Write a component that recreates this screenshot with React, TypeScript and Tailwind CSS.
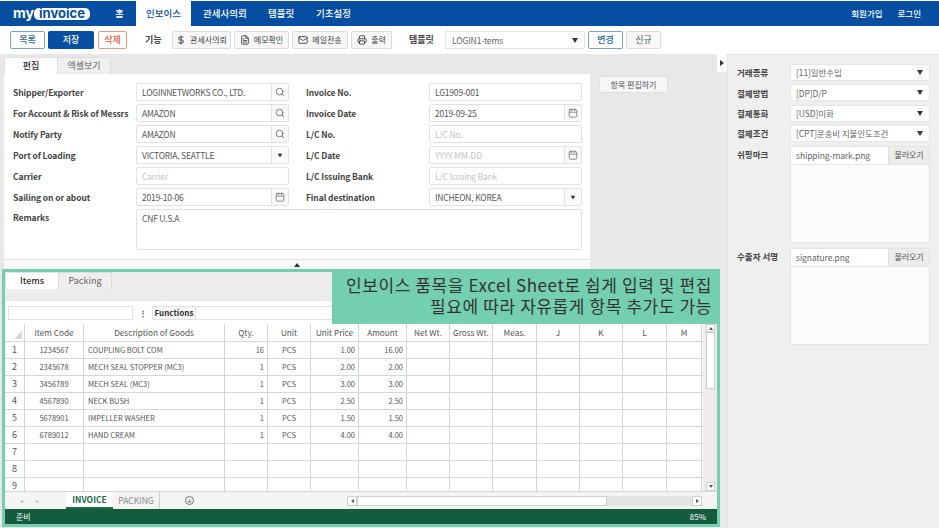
import { Calendar, DollarSign, FileText, Mail, Printer, Search } from "lucide-react";
import type { ReactNode } from "react";

const rows = [
  ["1234567", "COUPLING BOLT COM", "16", "PCS", "1.00", "16.00"],
  ["2345678", "MECH SEAL STOPPER (MC3)", "1", "PCS", "2.00", "2.00"],
  ["3456789", "MECH SEAL (MC3)", "1", "PCS", "3.00", "3.00"],
  ["4567890", "NECK BUSH", "1", "PCS", "2.50", "2.50"],
  ["5678901", "IMPELLER WASHER", "1", "PCS", "1.50", "1.50"],
  ["6789012", "HAND CREAM", "1", "PCS", "4.00", "4.00"],
];
const heads = ["Item Code", "Description of Goods", "Qty.", "Unit", "Unit Price", "Amount", "Net Wt.", "Gross Wt.", "Meas.", "J", "K", "L", "M"];
const gridCols = "grid grid-cols-[20px_59px_141px_43px_43px_48px_48px_43px_43px_44px_43px_43px_44px_35px]";

function Caret({ className = "" }: { className?: string }) {
  return <span className={`block w-0 h-0 border-l-[3.5px] border-r-[3.5px] border-t-[5px] border-l-transparent border-r-transparent border-t-[#333] ${className}`} />;
}

function ToolBtn({ icon, label, w }: { icon: ReactNode; label: string; w: string }) {
  return (
    <div className={`${w} h-[18px] flex items-center justify-center gap-[4px] bg-[#f7f7f7] border border-[#dcdcdc] rounded-[2px] text-[8px] text-[#444] whitespace-nowrap`}>
      {icon}
      <span>{label}</span>
    </div>
  );
}

function Field({ value, placeholder, addon }: { value?: string; placeholder?: string; addon?: "search" | "date" | "select" }) {
  return (
    <div className="w-[153px] shrink-0 h-[18px] flex items-stretch bg-white border border-[#e2e2e2] rounded-[2px] text-[8.5px] tracking-[-0.2px]">
      <div className={`flex-1 pl-[5px] flex items-center ${value ? "text-[#555]" : "text-[#c4c4c4]"}`}>{value ?? placeholder}</div>
      {addon && (
        <div className="w-[17px] flex items-center justify-center border-l border-[#e2e2e2] bg-[#fafafa]">
          {addon === "search" && <Search size={10} color="#666" />}
          {addon === "date" && <Calendar size={10} color="#777" />}
          {addon === "select" && <Caret className="scale-75" />}
        </div>
      )}
    </div>
  );
}

function FormRow({ a, b, c, d }: { a: string; b: ReactNode; c: string; d: ReactNode }) {
  return (
    <div className="flex items-center h-[18px] mb-[3px]">
      <div className="w-[131px] shrink-0 pl-[8px] text-[8.5px] tracking-[-0.1px] font-bold text-[#444] whitespace-nowrap">{a}</div>
      {b}
      <div className="w-[140px] shrink-0 pl-[17px] text-[8.5px] tracking-[-0.1px] font-bold text-[#444] whitespace-nowrap">{c}</div>
      {d}
    </div>
  );
}

function SideSelect({ label, value }: { label: string; value: string }) {
  return (
    <div className="flex items-center h-[17px] mb-[3.4px]">
      <div className="w-[53px] text-[8.5px] font-bold text-[#444]">{label}</div>
      <div className="w-[140px] h-[17px] flex items-center justify-between px-[5px] pr-[6px] bg-white border border-[#e6e6e6] rounded-[2px] text-[8.5px] tracking-[-0.1px] text-[#666]">
        <span>{value}</span>
        <Caret />
      </div>
    </div>
  );
}

function FileBox({ label, file }: { label: string; file: string }) {
  return (
    <div className="flex items-start">
      <div className="w-[53px] pt-[2px] text-[8.5px] font-bold text-[#444] whitespace-nowrap">{label}</div>
      <div className="w-[140px] border border-[#e4e4e4] rounded-[2px]">
        <div className="flex h-[17px] bg-white text-[8.5px] tracking-[-0.1px] text-[#666]">
          <div className="flex-1 pl-[5px] flex items-center">{file}</div>
          <div className="w-[41px] flex items-center justify-center bg-[#ececec] border-l border-[#dedede] text-[8px] text-[#555]">불러오기</div>
        </div>
        <div className="h-[78px] bg-[#fbfbfb] border-t border-[#e4e4e4]" />
      </div>
    </div>
  );
}

function Tabs({ first, second }: { first: string; second: string }) {
  return (
    <div className="flex h-[17px] text-[9px]">
      <div className="w-[53px] flex items-center justify-center bg-white border-t border-l border-[#e2e2e2] font-medium text-[#333]">{first}</div>
      <div className="w-[54px] flex items-center justify-center bg-[#efefef] border border-b-0 border-[#dcdcdc] text-[#666]">{second}</div>
    </div>
  );
}

export default function App() {
  return (
    <div className="w-[939px] h-[528px] overflow-hidden flex flex-col bg-white font-['Noto_Sans_CJK_KR','Noto_Sans',sans-serif]">
      {/* Header */}
      <div className="h-[25px] mt-[1px] shrink-0 bg-[#054ea1] flex items-center text-white text-[9.5px] font-medium">
        <div className="w-[136px] flex items-center pl-[13px]">
          <span className="w-[20px] text-[14px] leading-none font-bold font-['Inter',sans-serif] -mt-[2px]">my</span>
          <span className="ml-[1px] w-[56px] h-[12px] rounded-[5px] bg-white text-[#054ea1] text-[13px] leading-[11px] font-bold font-['Inter',sans-serif] text-center">invoice</span>
          <span className="ml-[25px]">홈</span>
        </div>
        <div className="w-[55px] h-full flex items-center justify-center bg-white text-[#054ea1]">인보이스</div>
        <span className="ml-[12px] w-[41px] whitespace-nowrap">관세사의뢰</span>
        <span className="ml-[24px] w-[25px] whitespace-nowrap">템플릿</span>
        <span className="ml-[23px] w-[33px] whitespace-nowrap">기초설정</span>
        <span className="ml-auto text-[8.5px]">회원가입</span>
        <span className="ml-[15px] mr-[18px] text-[8.5px]">로그인</span>
      </div>

      {/* Toolbar */}
      <div className="h-[28px] shrink-0 bg-white flex items-center pl-[10px] text-[9px]">
        <div className="w-[35px] h-[18px] flex items-center justify-center bg-white border border-[#7ba5bd] rounded-[2px] text-[#2a6a96] font-medium">목록</div>
        <div className="ml-[3px] w-[46px] h-[18px] flex items-center justify-center bg-[#054ea1] rounded-[2px] text-white font-medium">저장</div>
        <div className="ml-[4px] w-[29px] h-[18px] flex items-center justify-center bg-white border border-[#e29a84] rounded-[2px] text-[#d9603f] font-medium">삭제</div>
        <span className="ml-[18px] w-[27px] font-bold text-[#444]">기능</span>
        <ToolBtn w="w-[59px]" icon={<DollarSign size={10} color="#333" />} label="관세사의뢰" />
        <div className="w-[3px]" />
        <ToolBtn w="w-[55px]" icon={<FileText size={10} color="#333" />} label="메모확인" />
        <div className="w-[3px]" />
        <ToolBtn w="w-[56px]" icon={<Mail size={10} color="#333" />} label="메일전송" />
        <div className="w-[3px]" />
        <ToolBtn w="w-[41px]" icon={<Printer size={10} color="#333" />} label="출력" />
        <span className="ml-[17px] w-[36px] font-bold text-[#444]">템플릿</span>
        <div className="w-[140px] h-[18px] flex items-center justify-between px-[6px] bg-white border border-[#e4e4e4] rounded-[2px] text-[8.5px] tracking-[-0.1px] text-[#666]">
          <span>LOGIN1-tems</span>
          <Caret />
        </div>
        <div className="ml-[3px] w-[35px] h-[18px] flex items-center justify-center bg-white border border-[#7ba5bd] rounded-[2px] text-[#2a6a96] font-medium">변경</div>
        <div className="ml-[3px] w-[35px] h-[18px] flex items-center justify-center bg-[#f7f7f7] border border-[#dcdcdc] rounded-[2px] text-[#555]">신규</div>
      </div>

      {/* Body */}
      <div className="flex-1 flex min-h-0 bg-[#e8e8e8]">
        <div className="w-[727px] shrink-0 flex flex-col">
          <div className="flex h-[215px] shrink-0">
            <div className="ml-[4px] mt-[3px] w-[586px] flex flex-col">
              <Tabs first="편집" second="엑셀보기" />
              <div className="flex-1 bg-white pt-[9px] pl-[1px]">
                <FormRow a="Shipper/Exporter" b={<Field value="LOGINNETWORKS CO., LTD." addon="search" />} c="Invoice No." d={<Field value="LG1909-001" />} />
                <FormRow a="For Account & Risk of Messrs" b={<Field value="AMAZON" addon="search" />} c="Invoice Date" d={<Field value="2019-09-25" addon="date" />} />
                <FormRow a="Notify Party" b={<Field value="AMAZON" addon="search" />} c="L/C No." d={<Field placeholder="L/C No." />} />
                <FormRow a="Port of Loading" b={<Field value="VICTORIA, SEATTLE" addon="select" />} c="L/C Date" d={<Field placeholder="YYYY-MM-DD" addon="date" />} />
                <FormRow a="Carrier" b={<Field placeholder="Carrier" />} c="L/C Issuing Bank" d={<Field placeholder="L/C Issuing Bank" />} />
                <FormRow a="Sailing on or about" b={<Field value="2019-10-06" addon="date" />} c="Final destination" d={<Field value="INCHEON, KOREA" addon="select" />} />
                <div className="flex">
                  <div className="w-[131px] pl-[8px] pt-[2px] text-[8.5px] tracking-[-0.1px] font-bold text-[#444]">Remarks</div>
                  <div className="w-[446px] h-[41px] bg-white border border-[#e2e2e2] rounded-[2px] px-[5px] pt-[2px] text-[8.5px] tracking-[-0.2px] text-[#555]">CNF U.S.A</div>
                </div>
              </div>
              <div className="h-[10px] bg-[#fafafa] border-t border-[#e4e4e4] flex items-center justify-center">
                <span className="block w-0 h-0 border-l-[3px] border-r-[3px] border-b-[4px] border-l-transparent border-r-transparent border-b-[#333]" />
              </div>
            </div>
            <div className="ml-[9px] mt-[22px] w-[69px] h-[17px] flex items-center justify-center bg-[#f6f6f6] border border-[#e0e0e0] rounded-[2px] text-[8px] text-[#555]">항목 편집하기</div>
            <div className="ml-[49px] w-[10px] h-[18px] flex items-center justify-center bg-white">
              <span className="block w-0 h-0 border-t-[3px] border-b-[3px] border-l-[4px] border-t-transparent border-b-transparent border-l-[#333]" />
            </div>
          </div>

          {/* Sheet */}
          <div className="relative ml-[2px] w-[718px] h-[258px] border-[3px] border-[#74cfb0] bg-[#ececec] flex flex-col">
            <Tabs first="Items" second="Packing" />
            <div className="h-[12px] bg-[#ececec]" />
            <div className="h-[23px] bg-white flex items-center pl-[3px] text-[8px]">
              <div className="w-[125px] h-[14px] bg-white border border-[#e2e2e2]" />
              <span className="ml-[6px] w-[13px] text-[#555] font-bold">⋮</span>
              <div className="w-[44px] h-[14px] flex items-center justify-center bg-[#f6f6f6] border border-[#e2e2e2] font-bold text-[#333]">Functions</div>
              <div className="flex-1 h-[14px] bg-white border-y border-[#e2e2e2]" />
            </div>
            <div className="h-[167px] flex overflow-hidden bg-white">
              <div className="w-[698px] shrink-0 overflow-hidden">
                <div className={`${gridCols} h-[18px] border-b border-[#d6d6d6] text-[8.2px] text-[#555]`}>
                  <div className="border-r border-[#d6d6d6] flex items-end justify-end p-[2px]">
                    <span className="block w-0 h-0 border-l-[8px] border-b-[8px] border-l-transparent border-b-[#d8d8d8]" />
                  </div>
                  {heads.map((h) => (
                    <div key={h} className="border-r border-[#d6d6d6] flex items-center justify-center whitespace-nowrap">{h}</div>
                  ))}
                </div>
                {[1, 2, 3, 4, 5, 6, 7, 8, 9].map((n) => {
                  const row = rows[n - 1];
                  return (
                    <div key={n} className={`${gridCols} h-[17px] border-b border-[#d6d6d6] text-[7.5px] text-[#555]`}>
                      <div className="border-r border-[#d6d6d6] flex items-center justify-center text-[9px]">{n}</div>
                      <div className="border-r border-[#d6d6d6] flex items-center justify-center">{row?.[0]}</div>
                      <div className="border-r border-[#d6d6d6] flex items-center pl-[4px] whitespace-nowrap">{row?.[1]}</div>
                      <div className="border-r border-[#d6d6d6] flex items-center justify-end pr-[3px]">{row?.[2]}</div>
                      <div className="border-r border-[#d6d6d6] flex items-center justify-center">{row?.[3]}</div>
                      <div className="border-r border-[#d6d6d6] flex items-center justify-end pr-[3px]">{row?.[4]}</div>
                      <div className="border-r border-[#d6d6d6] flex items-center justify-end pr-[3px]">{row?.[5]}</div>
                      {[0, 1, 2, 3, 4, 5, 6].map((c) => (
                        <div key={c} className="border-r border-[#d6d6d6]" />
                      ))}
                    </div>
                  );
                })}
              </div>
              <div className="flex-1 bg-[#ececec] flex flex-col items-center pl-[1px]">
                <div className="w-[9px] h-[8px] bg-white border border-[#cfcfcf] flex items-center justify-center">
                  <span className="block w-0 h-0 border-l-[2px] border-r-[2px] border-b-[3px] border-l-transparent border-r-transparent border-b-[#555]" />
                </div>
                <div className="w-[9px] h-[57px] bg-white border border-[#cfcfcf]" />
                <div className="w-[9px] h-[9px] mt-auto bg-white border border-[#cfcfcf] flex items-center justify-center">
                  <span className="block w-0 h-0 border-l-[2px] border-r-[2px] border-t-[3px] border-l-transparent border-r-transparent border-t-[#555]" />
                </div>
              </div>
            </div>
            <div className="h-[18px] bg-[#f4f4f4] border-t border-[#d6d6d6] flex items-center text-[#bbb]">
              <div className="w-[61px] shrink-0 flex items-center pl-[15px] gap-[13px] text-[6px]">
                <span>◂</span>
                <span>▸</span>
              </div>
              <div className="w-[47px] shrink-0 h-full flex items-center justify-center bg-white border-b-2 border-[#1e6a4a] text-[8.5px] font-bold text-[#1e6a4a]">INVOICE</div>
              <div className="w-[47px] shrink-0 h-full flex items-center justify-center border-r border-[#cfcfcf] text-[8.5px] text-[#888]">PACKING</div>
              <div className="ml-[25px] w-[9px] h-[9px] rounded-full border border-[#777] flex items-center justify-center text-[8px] leading-none text-[#555]">+</div>
              <div className="ml-[153px] w-[10px] h-[10px] bg-white border border-[#cfcfcf] flex items-center justify-center">
                <span className="block w-0 h-0 border-t-[2px] border-b-[2px] border-r-[3px] border-t-transparent border-b-transparent border-r-[#555]" />
              </div>
              <div className="w-[250px] h-[10px] bg-white border border-[#cfcfcf]" />
              <div className="w-[85px] h-[10px] bg-[#e4e4e4]" />
              <div className="w-[10px] h-[10px] bg-white border border-[#cfcfcf] flex items-center justify-center">
                <span className="block w-0 h-0 border-t-[2px] border-b-[2px] border-l-[3px] border-t-transparent border-b-transparent border-l-[#555]" />
              </div>
            </div>
            <div className="h-[15px] bg-[#155c3f] flex items-center justify-between px-[11px] text-[8px] text-white">
              <span>준비</span>
              <span>85%</span>
            </div>
            {/* caption over the sheet */}
            <div className="absolute top-[-3px] right-[-3px] w-[388px] h-[55px] bg-[#74cfb0] pr-[8px] pt-[5px] text-right text-[17px] leading-[21px] tracking-[0.6px] text-[#333]">
              <div className="whitespace-nowrap h-[21px]">인보이스 품목을 Excel Sheet로 쉽게 입력 및 편집</div>
              <div className="whitespace-nowrap h-[21px]">필요에 따라 자유롭게 항목 추가도 가능</div>
            </div>
          </div>
        </div>

        {/* Sidebar */}
        <div className="flex-1 bg-[#efefef] border-l border-[#e2e2e2] border-t pt-[9px] pl-[9px]">
          <SideSelect label="거래종류" value="[11]일반수입" />
          <SideSelect label="결제방법" value="[DP]D/P" />
          <SideSelect label="결제통화" value="[USD]미화" />
          <SideSelect label="결제조건" value="[CPT]운송비 지불인도조건" />
          <FileBox label="쉬핑마크" file="shipping-mark.png" />
          <div className="h-[5px]" />
          <FileBox label="수출자 서명" file="signature.png" />
        </div>
      </div>
    </div>
  );
}
